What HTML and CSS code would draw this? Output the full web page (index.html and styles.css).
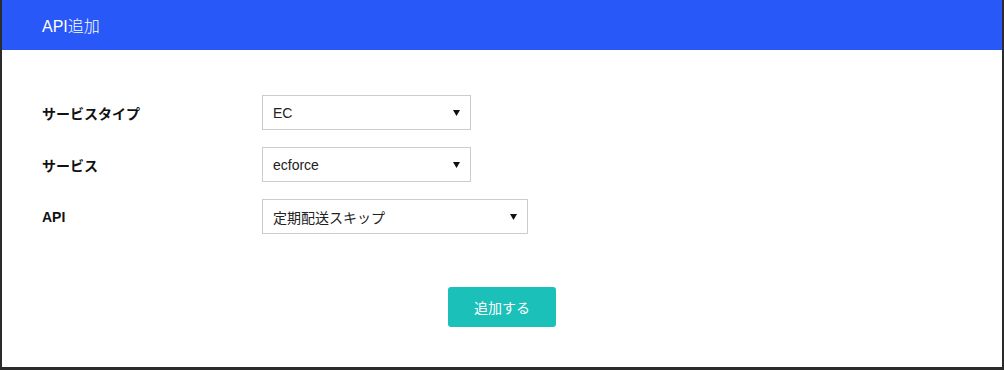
FILE: index.html
```html
<!DOCTYPE html>
<html lang="ja">
<head>
<meta charset="utf-8">
<title>API追加</title>
<link rel="stylesheet" href="styles.css">
</head>
<body>
<div class="modal">
  <div class="modal-header">API追加</div>
  <div class="modal-body">
    <div class="form-row">
      <div class="label">サービスタイプ</div>
      <div class="select">
        <span>EC</span>
        <svg class="arrow" width="7" height="6" viewBox="0 0 7 6"><polygon points="0,0 7,0 3.5,6" fill="#111"/></svg>
      </div>
    </div>
    <div class="form-row">
      <div class="label">サービス</div>
      <div class="select">
        <span>ecforce</span>
        <svg class="arrow" width="7" height="6" viewBox="0 0 7 6"><polygon points="0,0 7,0 3.5,6" fill="#111"/></svg>
      </div>
    </div>
    <div class="form-row">
      <div class="label">API</div>
      <div class="select wide">
        <span>定期配送スキップ</span>
        <svg class="arrow" width="7" height="6" viewBox="0 0 7 6"><polygon points="0,0 7,0 3.5,6" fill="#111"/></svg>
      </div>
    </div>
    <div class="actions">
      <button class="btn">追加する</button>
    </div>
  </div>
</div>
</body>
</html>
```
FILE: styles.css
```css
html, body {
  margin: 0;
  padding: 0;
  background: #2b2b2b;
}
body {
  font-family: "Liberation Sans", "Noto Sans CJK JP", sans-serif;
  width: 1004px;
  height: 370px;
  overflow: hidden;
}
.modal {
  margin-left: 2px;
  width: 1000px;
  height: 367px;
  background: #fff;
}
.modal-header {
  height: 50px;
  background: #2958f8;
  color: #fff;
  font-size: 16px;
  font-weight: 300;
  display: flex;
  align-items: center;
  padding-left: 40px;
}
.modal-body {
  padding: 45px 0 0 40px;
}
.form-row {
  display: flex;
  align-items: center;
  height: 35px;
  margin-bottom: 17px;
}
.label {
  width: 220px;
  font-size: 14px;
  font-weight: bold;
  color: #111;
}
.select {
  box-sizing: border-box;
  width: 209px;
  height: 35px;
  border: 1px solid #ccc;
  display: flex;
  align-items: center;
  justify-content: space-between;
  padding: 0 10px 0 10px;
  font-size: 14px;
  color: #222;
}
.select.wide {
  width: 266px;
}
.arrow {
  display: block;
}
.actions {
  display: flex;
  justify-content: center;
  padding-right: 40px;
  margin-top: 53px;
}
.btn {
  width: 108px;
  height: 40px;
  border: none;
  border-radius: 3px;
  background: #1bc0b9;
  color: #fff;
  font-family: "Liberation Sans", "Noto Sans CJK JP", sans-serif;
  font-size: 14px;
  padding: 0;
}
```
